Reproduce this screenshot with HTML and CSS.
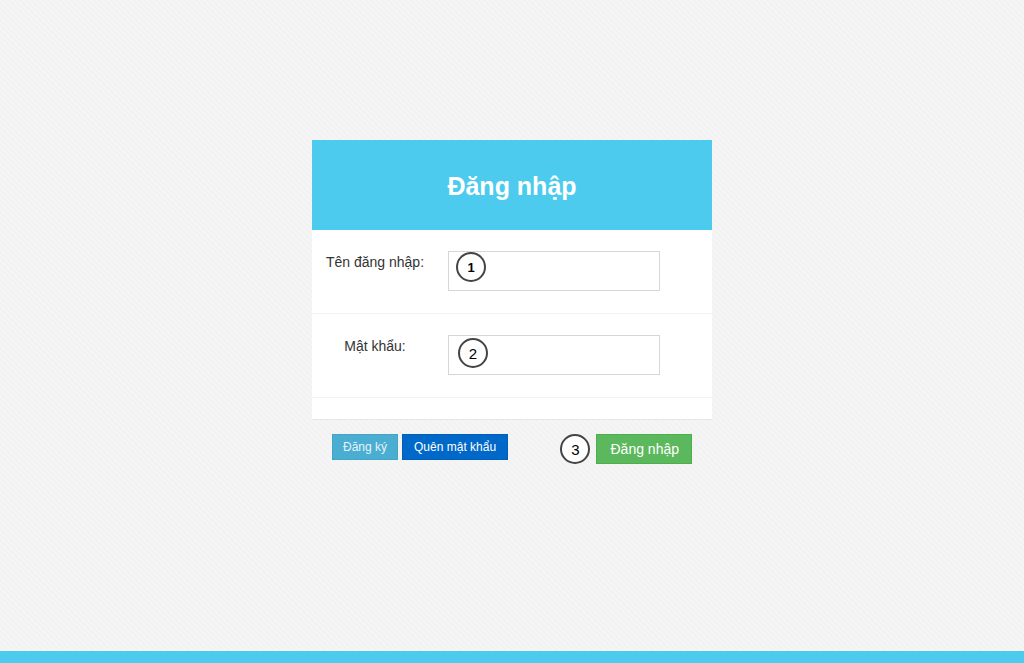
FILE: index.html
```html
<!DOCTYPE html>
<html lang="vi">
<head>
<meta charset="utf-8">
<title>Đăng nhập</title>
<link rel="stylesheet" href="styles.css">
</head>
<body>
<main class="page">
  <section class="panel">
    <header class="panel-head"><h1>Đăng nhập</h1></header>
    <div class="panel-body">
      <div class="row">
        <label class="label">Tên đăng nhập:</label>
        <div class="field"><input class="input" type="text"><span class="badge badge-1">1</span></div>
      </div>
      <div class="row">
        <label class="label">Mật khẩu:</label>
        <div class="field"><input class="input" type="password"><span class="badge badge-2">2</span></div>
      </div>
      <div class="spacer"></div>
    </div>
    <footer class="panel-foot">
      <div class="left-btns">
        <button class="btn btn-info">Đăng ký</button>
        <button class="btn btn-blue">Quên mật khẩu</button>
      </div>
      <div class="right-btns">
        <span class="badge badge-3">3</span>
        <button class="btn btn-green">Đăng nhập</button>
      </div>
    </footer>
  </section>
</main>
<div class="bottom-bar"></div>
</body>
</html>
```
FILE: styles.css
```css
html, body {
  margin: 0;
  padding: 0;
  height: 100%;
}
body {
  font-family: "Liberation Sans", Arial, sans-serif;
  color: #333;
  background-color: #f4f4f4;
  background-image: repeating-linear-gradient(45deg, #f5f5f5 0px, #f5f5f5 2px, #f2f2f2 2px, #f2f2f2 4px);
  display: flex;
  flex-direction: column;
  overflow: hidden;
}
.page {
  flex: 1;
  padding-top: 140px;
}
.panel {
  width: 400px;
  margin: 0 auto;
}
.panel-head {
  height: 90px;
  background: #4ccbee;
  display: flex;
  align-items: center;
  justify-content: center;
}
.panel-head h1 {
  margin: 0;
  color: #fff;
  font-size: 25px;
  font-weight: bold;
  line-height: 1;
  position: relative;
  top: 1px;
}
.panel-body {
  background: #fff;
  border-bottom: 1px solid #e6e6e6;
}
.row {
  display: flex;
  height: 84px;
  box-sizing: border-box;
  padding-top: 21px;
  border-bottom: 1px solid #f3f3f3;
}
.label {
  width: 126px;
  text-align: center;
  font-size: 14px;
  line-height: 20px;
  padding-top: 1px;
  color: #333;
}
.field {
  position: relative;
  margin-left: 10px;
}
.input {
  display: block;
  width: 212px;
  height: 40px;
  box-sizing: border-box;
  border: 1px solid #d6d6d6;
  background: #fff;
  margin: 0;
  padding: 0 10px;
}
.spacer {
  height: 21px;
}
.badge {
  position: absolute;
  width: 30px;
  height: 30px;
  box-sizing: border-box;
  border: 2px solid #444;
  border-radius: 50%;
  background: #fff;
  display: flex;
  align-items: center;
  justify-content: center;
  font-size: 13px;
  font-weight: bold;
  color: #000;
}
.badge-1 { left: 8px; top: 1px; }
.badge-2 { left: 10px; top: 3px; font-weight: normal; font-size: 15px; }
.badge-3 { position: static; margin-right: 6px; font-weight: normal; font-size: 15px; }
.panel-foot {
  display: flex;
  justify-content: space-between;
  align-items: flex-start;
  padding: 14px 20px 0 20px;
}
.left-btns {
  display: flex;
  gap: 4px;
}
.right-btns {
  display: flex;
  align-items: center;
}
.btn {
  font-family: "Liberation Sans", Arial, sans-serif;
  margin: 0;
  cursor: pointer;
  color: #fff;
  border: 1px solid transparent;
}
.btn-info {
  height: 26px;
  padding: 0 10px;
  font-size: 12px;
  background: #4aaed2;
  border-color: #45a3c6;
  color: #e6f3f9;
}
.btn-blue {
  height: 26px;
  padding: 0 11px;
  font-size: 12px;
  background: #0068c9;
  border-color: #005fb8;
}
.btn-green {
  height: 30px;
  padding: 0 12px 0 13px;
  font-size: 14px;
  background: #5cb85c;
  border-color: #4cae4c;
}
.bottom-bar {
  height: 12px;
  background: #4ccbee;
  flex-shrink: 0;
}
```
